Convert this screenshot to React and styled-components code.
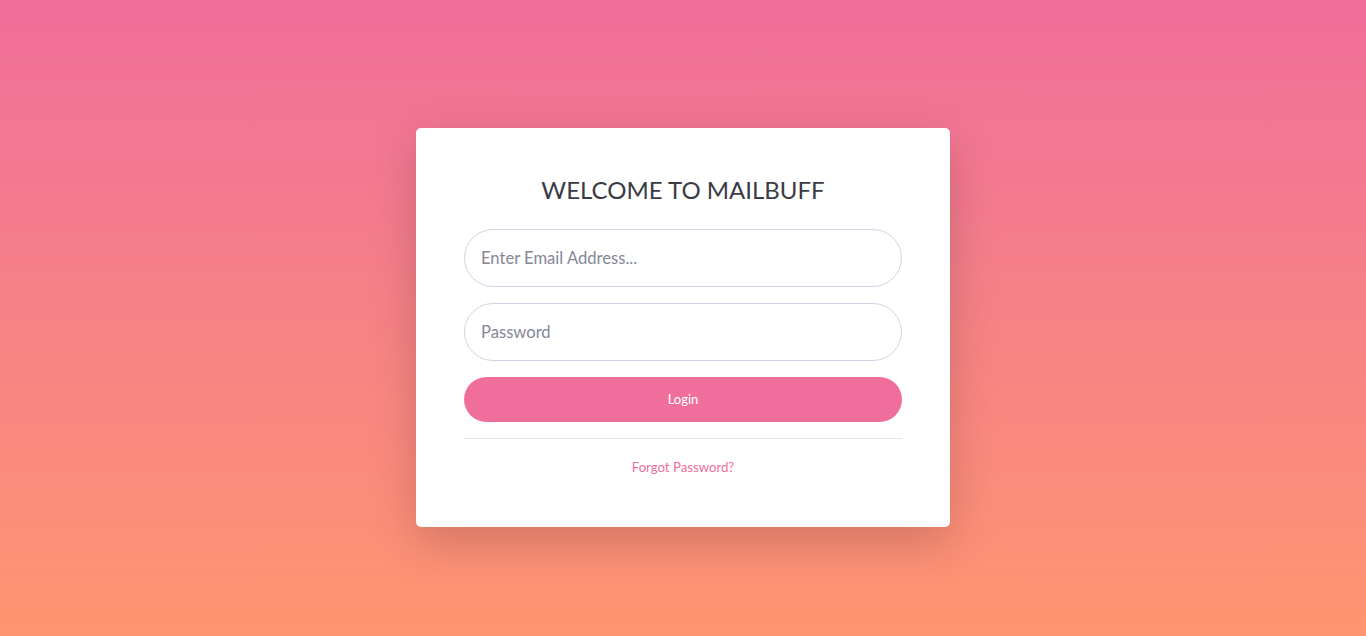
import React from "react";
import styled, { createGlobalStyle } from "styled-components";

const Global = createGlobalStyle`
  html, body { margin: 0; padding: 0; height: 100%; }
  body {
    font-family: Lato, "Noto Sans", sans-serif;
    background: linear-gradient(to bottom, #f06e9b 0%, #ff9571 100%);
    min-height: 636px;
  }
  #root { min-height: 636px; }
`;

const Page = styled.div`
  min-height: 636px;
  display: flex;
  justify-content: center;
  align-items: flex-start;
  padding-top: 128px;
  box-sizing: border-box;
`;

const Card = styled.div`
  width: 534px;
  box-sizing: border-box;
  background: #fff;
  border-radius: 5px;
  box-shadow: 0 1rem 3rem rgba(0, 0, 0, 0.175);
  padding: 48px 48px 49px;
  display: flex;
  flex-direction: column;
`;

const Title = styled.h4`
  margin: 0 0 24px;
  font-size: 24px;
  line-height: 28.8px;
  font-weight: 400;
  color: #3a3b45;
  text-align: center;
`;

const Form = styled.form`
  display: flex;
  flex-direction: column;
  gap: 16px;
`;

const Input = styled.input`
  height: 58px;
  box-sizing: border-box;
  border: 1px solid #d1d3e2;
  border-radius: 160px;
  padding: 0 16px;
  font-family: inherit;
  font-size: 16.6px;
  color: #6e707e;
  outline: none;
  &::placeholder { color: #858796; }
`;

const Button = styled.button`
  height: 45px;
  border: none;
  border-radius: 160px;
  background: #f06e9b;
  color: #fff;
  font-family: inherit;
  font-size: 13px;
  cursor: pointer;
`;

const Divider = styled.hr`
  margin: 16px 0;
  border: 0;
  border-top: 1px solid rgba(0, 0, 0, 0.1);
`;

const LinkRow = styled.div`
  text-align: center;
  line-height: 21px;
`;

const Link = styled.a`
  color: #f06e9b;
  font-size: 13.2px;
  text-decoration: none;
`;

export default function App() {
  return (
    <>
      <Global />
      <Page>
        <Card>
          <Title>WELCOME TO MAILBUFF</Title>
          <Form onSubmit={(e) => e.preventDefault()}>
            <Input type="email" placeholder="Enter Email Address..." />
            <Input type="password" placeholder="Password" />
            <Button type="submit">Login</Button>
          </Form>
          <Divider />
          <LinkRow>
            <Link href="#">Forgot Password?</Link>
          </LinkRow>
        </Card>
      </Page>
    </>
  );
}
